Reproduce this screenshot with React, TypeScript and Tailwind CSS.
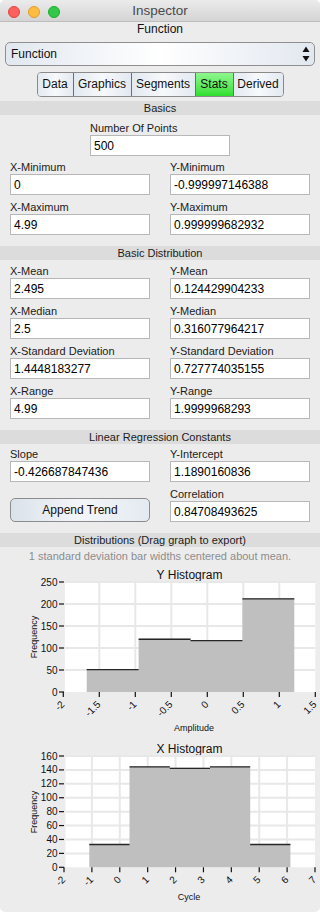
import React from "react";

type Bar = { x0: number; x1: number; v: number };

type HistProps = {
  title: string;
  xLabel: string;
  xLabelX: number;
  height: number;
  titleY: number;
  top: number;
  bottom: number;
  left: number;
  right: number;
  xMin: number;
  xMax: number;
  xStep: number;
  yMax: number;
  yStep: number;
  bars: Bar[];
  freqY: number;
  xLabelY: number;
};

function range(a: number, b: number, step: number) {
  const out: number[] = [];
  for (let v = a; v <= b + 1e-9; v += step) out.push(Math.round(v * 10) / 10);
  return out;
}

function Histogram(p: HistProps) {
  const xOf = (v: number) => p.left + ((v - p.xMin) / (p.xMax - p.xMin)) * (p.right - p.left);
  const yOf = (v: number) => p.bottom - (v / p.yMax) * (p.bottom - p.top);
  const xTicks = range(p.xMin, p.xMax, p.xStep);
  const yTicks = range(0, p.yMax, p.yStep);

  // one outline for all bars so there are no seams between them
  let d = `M${p.bars[0].x0} ${p.bottom}`;
  p.bars.forEach((b) => {
    d += ` L${b.x0} ${yOf(b.v)} L${b.x1} ${yOf(b.v)}`;
  });
  d += ` L${p.bars[p.bars.length - 1].x1} ${p.bottom} Z`;

  return (
    <svg width={320} height={p.height} className="block" fontFamily="'Liberation Sans', Arial, sans-serif">
      <text x={189.5} y={p.titleY} textAnchor="middle" fontSize={12} fill="#111">
        {p.title}
      </text>
      <rect x={p.left + 1.5} y={p.top} width={p.right - p.left - 1.5} height={p.bottom - p.top} fill="#fff" />
      {yTicks.slice(1).map((v) => (
        <line key={"gy" + v} x1={p.left + 1.5} x2={p.right} y1={yOf(v)} y2={yOf(v)} stroke="#e8e8e8" strokeWidth={2} />
      ))}
      {xTicks.slice(1, -1).map((v) => (
        <line key={"gx" + v} x1={xOf(v)} x2={xOf(v)} y1={p.top} y2={p.bottom} stroke="#e8e8e8" strokeWidth={2} />
      ))}
      <path d={d} fill="#bfbfbf" />
      {p.bars.map((b, i) => (
        <line key={i} x1={b.x0} x2={b.x1} y1={yOf(b.v) + 0.5} y2={yOf(b.v) + 0.5} stroke="#262626" strokeWidth={1.3} />
      ))}
      {yTicks.map((v) => (
        <g key={"ty" + v}>
          <line x1={59} x2={64} y1={yOf(v)} y2={yOf(v)} stroke="#111" strokeWidth={1.2} />
          <text x={57.5} y={yOf(v) + 3.5} textAnchor="end" fontSize={10} fill="#111">
            {v}
          </text>
        </g>
      ))}
      {xTicks.map((v) => (
        <g key={"tx" + v}>
          <line x1={xOf(v)} x2={xOf(v)} y1={p.bottom} y2={p.bottom + 5} stroke="#111" strokeWidth={1.2} />
          <text
            transform={`translate(${xOf(v) + 2} ${p.bottom + 13}) rotate(-45)`}
            textAnchor="end"
            fontSize={10}
            fill="#111"
          >
            {v}
          </text>
        </g>
      ))}
      <text transform={`translate(36.5 ${p.freqY}) rotate(-90)`} textAnchor="middle" fontSize={9} fill="#111">
        Frequency
      </text>
      <text x={p.xLabelX} y={p.xLabelY} textAnchor="middle" fontSize={9} fill="#111">
        {p.xLabel}
      </text>
    </svg>
  );
}

function Field({ label, value, className = "" }: { label: string; value: string; className?: string }) {
  return (
    <div className={className}>
      <div className="h-[14px] text-[11px] leading-[14px] text-[#1b1b1b]">{label}</div>
      <div className="h-[21px] border border-[#b7b7b7] bg-white pl-[3px] text-[12px] leading-[20px] text-black">
        {value}
      </div>
    </div>
  );
}

function SectionHeader({ children, className = "" }: { children: React.ReactNode; className?: string }) {
  return (
    <div className={`h-[14px] bg-[#dcdcdc] text-center text-[11px] leading-[14px] text-[#1b1b1b] ${className}`}>
      {children}
    </div>
  );
}

const tabs = [
  { name: "Data", w: "w-[35px]" },
  { name: "Graphics", w: "w-[58px]" },
  { name: "Segments", w: "w-[64px]" },
  { name: "Stats", w: "w-[38px]" },
  { name: "Derived", w: "w-[50px]" },
];

export default function App() {
  return (
    <div className="h-[912px] w-[320px] bg-white font-['Liberation_Sans',Arial,sans-serif]">
      <div className="h-[912px] w-[320px] overflow-hidden rounded-[5px] bg-[#ececec]">
        {/* title bar */}
        <div className="grid h-[22px] grid-cols-[1fr_auto_1fr] items-center border-b border-[#bdbdbd] bg-gradient-to-b from-[#ebebeb] to-[#d4d4d4]">
          <div className="flex items-center gap-[8px] pl-[8px] pt-[1px]">
            <span className="h-[12px] w-[12px] rounded-full border border-[#e0443e] bg-[#fc605c]" />
            <span className="h-[12px] w-[12px] rounded-full border border-[#dea123] bg-[#fdbc40]" />
            <span className="h-[12px] w-[12px] rounded-full border border-[#1aab29] bg-[#34c84a]" />
          </div>
          <div className="text-[13.5px] leading-[22px] text-[#4a4a4a]">Inspector</div>
          <div />
        </div>

        <div className="h-[14px] text-center text-[12px] leading-[14px] text-[#111]">Function</div>

        {/* select */}
        <div className="mx-[5px] mt-[6px] flex h-[24px] items-center justify-between rounded-[5px] border border-[#8f8f8f] bg-gradient-to-r from-[#e2e8f0] via-white to-[#e2e8f0] pl-[5px] pr-[4px] text-[12px] text-[#111]">
          <span>Function</span>
          <svg width={8} height={16} viewBox="0 0 8 16">
            <path d="M4 0.5 L7.5 6 L0.5 6 Z" fill="#111" />
            <path d="M4 15.5 L7.5 10 L0.5 10 Z" fill="#111" />
          </svg>
        </div>

        {/* tabs */}
        <div className="mt-[6px] flex justify-center">
          <div className="flex h-[25px] overflow-hidden rounded-[4px] border border-[#8a8a8a]">
            {tabs.map((t, i) => (
              <div
                key={t.name}
                className={`${t.w} ${i > 0 ? "border-l border-[#6f6f6f]" : ""} ${
                  t.name === "Stats"
                    ? "bg-gradient-to-b from-[#8cf78c] to-[#2bdf2b]"
                    : "bg-gradient-to-r from-[#e3e9f1] via-[#f7f9fb] to-[#e3e9f1]"
                } text-center text-[12px] leading-[23px] text-[#111]`}
              >
                {t.name}
              </div>
            ))}
          </div>
        </div>

        <SectionHeader className="mt-[4px]">Basics</SectionHeader>
        <div className="mt-[6px] flex justify-center">
          <Field className="w-[140px]" label="Number Of Points" value="500" />
        </div>
        <div className="mt-[4px] grid grid-cols-2 gap-x-[20px] gap-y-[5px] px-[10px]">
          <Field label="X-Minimum" value="0" />
          <Field label="Y-Minimum" value="-0.999997146388" />
          <Field label="X-Maximum" value="4.99" />
          <Field label="Y-Maximum" value="0.999999682932" />
        </div>

        <SectionHeader className="mt-[11px]">Basic Distribution</SectionHeader>
        <div className="mt-[4px] grid grid-cols-2 gap-x-[20px] gap-y-[5px] px-[10px]">
          <Field label="X-Mean" value="2.495" />
          <Field label="Y-Mean" value="0.124429904233" />
          <Field label="X-Median" value="2.5" />
          <Field label="Y-Median" value="0.316077964217" />
          <Field label="X-Standard Deviation" value="1.4448183277" />
          <Field label="Y-Standard Deviation" value="0.727774035155" />
          <Field label="X-Range" value="4.99" />
          <Field label="Y-Range" value="1.9999968293" />
        </div>

        <SectionHeader className="mt-[11px]">Linear Regression Constants</SectionHeader>
        <div className="mt-[3px] grid grid-cols-2 gap-x-[20px] px-[10px]">
          <div>
            <Field label="Slope" value="-0.426687847436" />
            <div className="mt-[16px] h-[24px] rounded-[5px] border border-[#8c8c8c] bg-gradient-to-r from-[#dbe2eb] via-[#f3f6f9] to-[#e4eaf1] text-center text-[12px] leading-[22px] text-[#111]">
              Append Trend
            </div>
          </div>
          <div className="flex flex-col gap-[5px]">
            <Field label="Y-Intercept" value="1.1890160836" />
            <Field label="Correlation" value="0.84708493625" />
          </div>
        </div>

        <SectionHeader className="mt-[11px]">Distributions (Drag graph to export)</SectionHeader>
        <div className="mt-[2px] h-[14px] text-center text-[11px] leading-[14px] text-[#8d8d8d]">
          1 standard deviation bar widths centered about mean.
        </div>

        <Histogram
          title="Y Histogram"
          xLabel="Amplitude"
          xLabelX={194}
          height={172}
          titleY={15.5}
          top={19}
          bottom={129}
          left={63.3}
          right={315.3}
          xMin={-2}
          xMax={1.5}
          xStep={0.5}
          yMax={250}
          yStep={50}
          freqY={74}
          xLabelY={168}
          bars={[
            { x0: 86.7, x1: 138.6, v: 52 },
            { x0: 138.6, x1: 190.5, v: 121 },
            { x0: 190.5, x1: 242.4, v: 118 },
            { x0: 242.4, x1: 294.3, v: 213 },
          ]}
        />
        <Histogram
          title="X Histogram"
          xLabel="Cycle"
          xLabelX={189}
          height={170}
          titleY={17.5}
          top={21}
          bottom={132.3}
          left={64}
          right={315}
          xMin={-2}
          xMax={7}
          xStep={1}
          yMax={160}
          yStep={20}
          freqY={77}
          xLabelY={165}
          bars={[
            { x0: 89.3, x1: 129.5, v: 33.5 },
            { x0: 129.5, x1: 169.8, v: 145 },
            { x0: 169.8, x1: 210, v: 143 },
            { x0: 210, x1: 250.2, v: 145 },
            { x0: 250.2, x1: 290.4, v: 33.5 },
          ]}
        />
      </div>
    </div>
  );
}
